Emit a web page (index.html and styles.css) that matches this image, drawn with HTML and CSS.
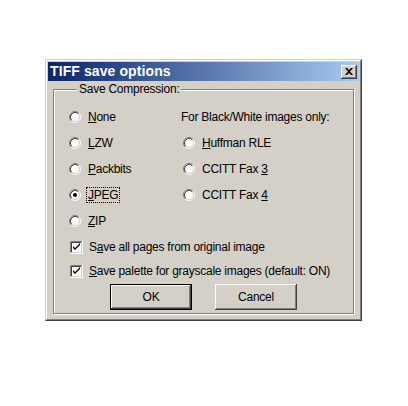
FILE: index.html
```html
<!DOCTYPE html>
<html>
<head>
<meta charset="utf-8">
<link rel="stylesheet" href="styles.css">
</head>
<body>
<div class="dialog">
  <div class="frame">
    <div class="titlebar">
      <span class="title">TIFF save options</span>
      <span class="close"><svg width="8" height="7" viewBox="0 0 8 7"><path d="M0 0h2l2 2 2-2h2L5 3.5 8 7H6L4 5 2 7H0l3-3.5z" fill="#000"/></svg></span>
    </div>
    <fieldset class="group">
      <legend>Save Compression:</legend>
      <div class="options">
        <div class="col">
          <div class="row"><svg class="radio" width="12" height="12" viewBox="0 0 12 12"><circle cx="6" cy="6" r="4.5" fill="#fff"/><path d="M2.11 9.89A5.5 5.5 0 0 1 9.89 2.11" stroke="#808080" fill="none"/><path d="M9.89 2.11A5.5 5.5 0 0 1 2.11 9.89" stroke="#fff" fill="none"/><path d="M2.82 9.18A4.5 4.5 0 0 1 9.18 2.82" stroke="#404040" fill="none"/><path d="M9.18 2.82A4.5 4.5 0 0 1 2.82 9.18" stroke="#d4d0c8" fill="none"/></svg><span class="lbl"><u>N</u>one</span></div>
          <div class="row"><svg class="radio" width="12" height="12" viewBox="0 0 12 12"><circle cx="6" cy="6" r="4.5" fill="#fff"/><path d="M2.11 9.89A5.5 5.5 0 0 1 9.89 2.11" stroke="#808080" fill="none"/><path d="M9.89 2.11A5.5 5.5 0 0 1 2.11 9.89" stroke="#fff" fill="none"/><path d="M2.82 9.18A4.5 4.5 0 0 1 9.18 2.82" stroke="#404040" fill="none"/><path d="M9.18 2.82A4.5 4.5 0 0 1 2.82 9.18" stroke="#d4d0c8" fill="none"/></svg><span class="lbl"><u>L</u>ZW</span></div>
          <div class="row"><svg class="radio" width="12" height="12" viewBox="0 0 12 12"><circle cx="6" cy="6" r="4.5" fill="#fff"/><path d="M2.11 9.89A5.5 5.5 0 0 1 9.89 2.11" stroke="#808080" fill="none"/><path d="M9.89 2.11A5.5 5.5 0 0 1 2.11 9.89" stroke="#fff" fill="none"/><path d="M2.82 9.18A4.5 4.5 0 0 1 9.18 2.82" stroke="#404040" fill="none"/><path d="M9.18 2.82A4.5 4.5 0 0 1 2.82 9.18" stroke="#d4d0c8" fill="none"/></svg><span class="lbl"><u>P</u>ackbits</span></div>
          <div class="row"><svg class="radio" width="12" height="12" viewBox="0 0 12 12"><circle cx="6" cy="6" r="4.5" fill="#fff"/><path d="M2.11 9.89A5.5 5.5 0 0 1 9.89 2.11" stroke="#808080" fill="none"/><path d="M9.89 2.11A5.5 5.5 0 0 1 2.11 9.89" stroke="#fff" fill="none"/><path d="M2.82 9.18A4.5 4.5 0 0 1 9.18 2.82" stroke="#404040" fill="none"/><path d="M9.18 2.82A4.5 4.5 0 0 1 2.82 9.18" stroke="#d4d0c8" fill="none"/><circle cx="6" cy="6" r="2" fill="#000"/></svg><span class="lbl focus"><u>J</u>PEG</span></div>
          <div class="row"><svg class="radio" width="12" height="12" viewBox="0 0 12 12"><circle cx="6" cy="6" r="4.5" fill="#fff"/><path d="M2.11 9.89A5.5 5.5 0 0 1 9.89 2.11" stroke="#808080" fill="none"/><path d="M9.89 2.11A5.5 5.5 0 0 1 2.11 9.89" stroke="#fff" fill="none"/><path d="M2.82 9.18A4.5 4.5 0 0 1 9.18 2.82" stroke="#404040" fill="none"/><path d="M9.18 2.82A4.5 4.5 0 0 1 2.82 9.18" stroke="#d4d0c8" fill="none"/></svg><span class="lbl"><u>Z</u>IP</span></div>
        </div>
        <div class="col right">
          <div class="row head">For Black/White images only:</div>
          <div class="row"><svg class="radio" width="12" height="12" viewBox="0 0 12 12"><circle cx="6" cy="6" r="4.5" fill="#fff"/><path d="M2.11 9.89A5.5 5.5 0 0 1 9.89 2.11" stroke="#808080" fill="none"/><path d="M9.89 2.11A5.5 5.5 0 0 1 2.11 9.89" stroke="#fff" fill="none"/><path d="M2.82 9.18A4.5 4.5 0 0 1 9.18 2.82" stroke="#404040" fill="none"/><path d="M9.18 2.82A4.5 4.5 0 0 1 2.82 9.18" stroke="#d4d0c8" fill="none"/></svg><span class="lbl"><u>H</u>uffman RLE</span></div>
          <div class="row"><svg class="radio" width="12" height="12" viewBox="0 0 12 12"><circle cx="6" cy="6" r="4.5" fill="#fff"/><path d="M2.11 9.89A5.5 5.5 0 0 1 9.89 2.11" stroke="#808080" fill="none"/><path d="M9.89 2.11A5.5 5.5 0 0 1 2.11 9.89" stroke="#fff" fill="none"/><path d="M2.82 9.18A4.5 4.5 0 0 1 9.18 2.82" stroke="#404040" fill="none"/><path d="M9.18 2.82A4.5 4.5 0 0 1 2.82 9.18" stroke="#d4d0c8" fill="none"/></svg><span class="lbl">CCITT Fax <u>3</u></span></div>
          <div class="row"><svg class="radio" width="12" height="12" viewBox="0 0 12 12"><circle cx="6" cy="6" r="4.5" fill="#fff"/><path d="M2.11 9.89A5.5 5.5 0 0 1 9.89 2.11" stroke="#808080" fill="none"/><path d="M9.89 2.11A5.5 5.5 0 0 1 2.11 9.89" stroke="#fff" fill="none"/><path d="M2.82 9.18A4.5 4.5 0 0 1 9.18 2.82" stroke="#404040" fill="none"/><path d="M9.18 2.82A4.5 4.5 0 0 1 2.82 9.18" stroke="#d4d0c8" fill="none"/></svg><span class="lbl">CCITT Fax <u>4</u></span></div>
        </div>
      </div>
      <div class="checks">
        <div class="crow"><svg class="check" width="13" height="13" viewBox="0 0 13 13"><rect x="2" y="2" width="9" height="9" fill="#fff"/><path d="M0.5 12V0.5H12" stroke="#808080" fill="none"/><path d="M0 12.5H12.5V0" stroke="#fff" fill="none"/><path d="M1.5 11V1.5H11" stroke="#404040" fill="none"/><path d="M1 11.5H11.5V1" stroke="#d4d0c8" fill="none"/><path d="M3 5v2l2 2 5-5V2L5 7z" fill="#000"/></svg><span class="lbl">S<u>a</u>ve all pages from original image</span></div>
        <div class="crow"><svg class="check" width="13" height="13" viewBox="0 0 13 13"><rect x="2" y="2" width="9" height="9" fill="#fff"/><path d="M0.5 12V0.5H12" stroke="#808080" fill="none"/><path d="M0 12.5H12.5V0" stroke="#fff" fill="none"/><path d="M1.5 11V1.5H11" stroke="#404040" fill="none"/><path d="M1 11.5H11.5V1" stroke="#d4d0c8" fill="none"/><path d="M3 5v2l2 2 5-5V2L5 7z" fill="#000"/></svg><span class="lbl"><u>S</u>ave palette for grayscale images (default: ON)</span></div>
      </div>
      <div class="buttons">
        <span class="btn default"><span class="face">OK</span></span>
        <span class="btn"><span class="face">Cancel</span></span>
      </div>
    </fieldset>
  </div>
</div>
</body>
</html>
```
FILE: styles.css
```css
html, body {
  margin: 0;
  padding: 0;
  background: #ffffff;
}
body {
  font-family: "Liberation Sans", Arial, sans-serif;
  font-size: 12px;
  color: #000;
}
.dialog {
  margin: 59px 0 0 45px;
  width: 317px;
  height: 262px;
  box-sizing: border-box;
  border: 1px solid;
  border-color: #d4d0c8 #404040 #404040 #d4d0c8;
  background: #d4d0c8;
}
.frame {
  height: 100%;
  box-sizing: border-box;
  border: 1px solid;
  border-color: #ffffff #808080 #808080 #ffffff;
  padding: 1px;
  display: flex;
  flex-direction: column;
}
.titlebar {
  height: 19px;
  flex: none;
  display: flex;
  align-items: center;
  justify-content: space-between;
  background: linear-gradient(to right, #0a246a, #a6caf0);
  padding: 0 2px 0 2px;
}
.title {
  color: #fff;
  font-weight: bold;
  font-size: 14px;
  letter-spacing: 0.1px;
  line-height: 19px;
}
.close {
  width: 16px;
  height: 14px;
  box-sizing: border-box;
  background: #d4d0c8;
  box-shadow: inset -1px -1px #404040, inset 1px 1px #ffffff, inset -2px -2px #808080;
  display: flex;
  align-items: center;
  justify-content: center;
}
.close svg { display: block; }
.group {
  margin: 1px 5px 4px 5px;
  padding: 8px 0 0 15px;
  border: 1px solid #808080;
  box-shadow: inset 1px 1px 0 #ffffff, 1px 1px 0 #ffffff;
  flex: 1;
  min-width: 0;
  letter-spacing: -0.25px;
}
.group legend {
  margin-left: 8px;
  padding: 0 2px;
  line-height: 14px;
  background: #d4d0c8;
}
.options {
  display: flex;
}
.col {
  width: 114px;
  display: flex;
  flex-direction: column;
}
.col.right {
  width: auto;
}
.row {
  height: 26px;
  display: flex;
  align-items: center;
}
.row.head {
  margin-left: -2px;
}
.radio {
  display: block;
  flex: none;
  margin-right: 7px;
}
.lbl {
  line-height: 14px;
  white-space: nowrap;
}
.lbl.focus {
  outline: 1px dotted #000;
  outline-offset: 0;
  padding: 0 1px;
  margin-left: -1px;
}
.checks {
  display: flex;
  flex-direction: column;
  margin-top: 1px;
  padding-left: 1px;
}
.crow {
  height: 24px;
  display: flex;
  align-items: center;
}
.check {
  display: block;
  flex: none;
  margin-right: 6px;
}
.buttons {
  display: flex;
  justify-content: center;
  gap: 23px;
  margin: 1px 0 0 -15px;
}
.btn {
  width: 82px;
  height: 26px;
  box-sizing: border-box;
  display: flex;
}
.btn .face {
  flex: 1;
  display: flex;
  align-items: center;
  justify-content: center;
  box-shadow: inset -1px -1px #404040, inset 1px 1px #ffffff, inset -2px -2px #808080;
}
.btn.default {
  border: 1px solid #000;
}
```
